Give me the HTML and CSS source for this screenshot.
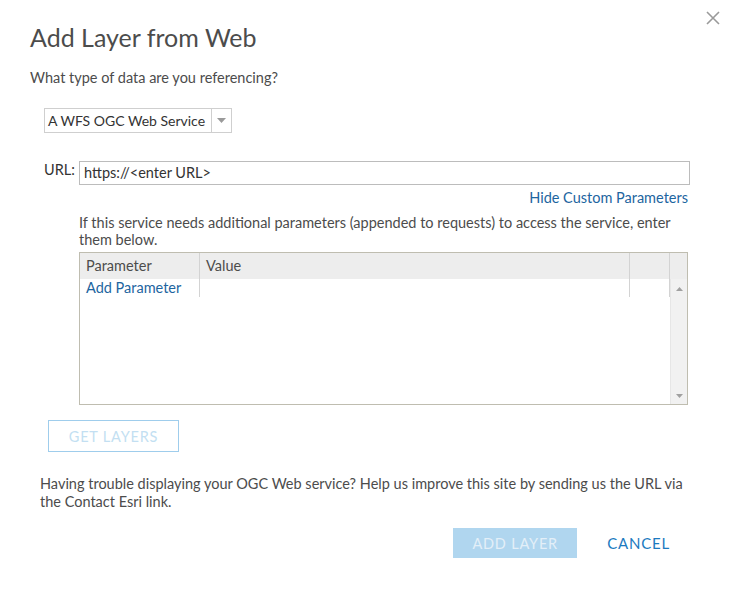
FILE: index.html
```html
<!DOCTYPE html>
<html>
<head>
<meta charset="utf-8">
<link rel="stylesheet" href="styles.css">
</head>
<body>
<div class="dialog">
  <button class="close" aria-label="Close">
    <svg width="14" height="14" viewBox="0 0 14 14"><path d="M1 1L13 13M13 1L1 13" stroke="#9a9a9a" stroke-width="1.6" fill="none"/></svg>
  </button>
  <h1 class="title">Add Layer from Web</h1>
  <p class="question">What type of data are you referencing?</p>
  <div class="select">
    <span class="select-text">A WFS OGC Web Service</span>
    <span class="select-arrow"><svg width="9" height="5" viewBox="0 0 9 5"><path d="M0 0H9L4.5 5Z" fill="#9a9a9a"/></svg></span>
  </div>
  <div class="url-row">
    <label class="url-label">URL:</label>
    <div class="url-input">https://&lt;enter URL&gt;</div>
  </div>
  <div class="params">
    <div class="hide-link">Hide Custom Parameters</div>
    <p class="params-note">If this service needs additional parameters (appended to requests) to access the service, enter them below.</p>
    <div class="grid">
      <div class="grid-header">
        <div class="col col-param">Parameter</div>
        <div class="col col-value">Value</div>
        <div class="col col-extra"></div>
        <div class="col col-scroll-head"></div>
      </div>
      <div class="grid-body">
        <div class="rows">
          <div class="row">
            <div class="cell cell-param">Add Parameter</div>
            <div class="cell cell-value"></div>
            <div class="cell cell-extra"></div>
          </div>
        </div>
        <div class="scrollbar">
          <svg width="7" height="4" viewBox="0 0 7 4"><path d="M0 4H7L3.5 0Z" fill="#a0a0a0"/></svg>
          <svg width="7" height="4" viewBox="0 0 7 4"><path d="M0 0H7L3.5 4Z" fill="#a0a0a0"/></svg>
        </div>
      </div>
    </div>
  </div>
  <button class="btn-outline">GET LAYERS</button>
  <p class="help">Having trouble displaying your OGC Web service? Help us improve this site by sending us the URL via the Contact Esri link.</p>
  <div class="actions">
    <button class="btn-primary">ADD LAYER</button>
    <button class="btn-link">CANCEL</button>
  </div>
</div>
</body>
</html>
```
FILE: styles.css
```css
* { box-sizing: border-box; }
html, body { margin: 0; padding: 0; background: #fff; }
body {
  font-family: Lato, "Open Sans", sans-serif;
  color: #4c4c4c;
  font-size: 14.5px;
}
.dialog {
  position: relative;
  width: 730px;
  height: 590px;
  padding: 22px 40px 0 30px;
}
.close {
  position: absolute;
  top: 11px;
  right: 10px;
  border: 0;
  background: none;
  padding: 0;
  width: 14px;
  height: 14px;
  display: flex;
}
.title {
  margin: 0;
  font-size: 25px;
  font-weight: 400;
  line-height: 30px;
  color: #4c4c4c;
}
.question {
  margin: 16px 0 0;
  line-height: 20px;
}
.select {
  margin: 20px 0 0 14px;
  width: 188px;
  height: 25px;
  border: 1px solid #cfcfcf;
  display: flex;
  align-items: stretch;
}
.select-text {
  flex: 1;
  padding-left: 3px;
  line-height: 23px;
  color: #333;
  white-space: nowrap;
  font-size: 14px;
}
.select-arrow {
  width: 20px;
  border-left: 1px solid #cfcfcf;
  display: flex;
  align-items: center;
  justify-content: center;
}
.url-row {
  display: flex;
  align-items: flex-start;
  margin: 28px 0 0 14px;
}
.url-label {
  width: 35px;
  line-height: 18px;
  color: #333;
}
.url-input {
  flex: 1;
  height: 24px;
  border: 1px solid #bcbcbc;
  padding-left: 4px;
  line-height: 22px;
  color: #333;
}
.params {
  margin-left: 49px;
  margin-right: 2px;
}
.hide-link {
  text-align: right;
  color: #1d65a0;
  line-height: 20px;
  margin-top: 3px;
}
.params-note {
  margin: 6px 0 0;
  line-height: 17px;
}
.grid {
  margin-top: 4px;
  height: 153px;
  border: 1px solid #bfbdb0;
  display: flex;
  flex-direction: column;
}
.grid-header {
  display: flex;
  background: #ededed;
  height: 26px;
  flex: none;
}
.col {
  line-height: 25px;
  padding-left: 6px;
  color: #4c4c4c;
}
.col-param { width: 120px; border-right: 1px solid #d3d3d3; }
.col-value { width: 430px; border-right: 1px solid #d3d3d3; }
.col-extra { width: 40px; border-right: 1px solid #d3d3d3; }
.col-scroll-head { flex: 1; }
.grid-body {
  flex: 1;
  display: flex;
}
.rows { flex: 1; }
.row { display: flex; height: 18px; }
.cell { line-height: 18px; padding-left: 6px; }
.cell-param { width: 120px; border-right: 1px solid #d3d3d3; color: #1d65a0; }
.cell-value { width: 430px; border-right: 1px solid #d3d3d3; }
.cell-extra { width: 40px; border-right: 1px solid #d3d3d3; }
.scrollbar {
  width: 18px;
  background: #f1f1f1;
  border-left: 1px solid #e6e6e6;
  display: flex;
  flex-direction: column;
  justify-content: space-between;
  align-items: center;
  padding: 8px 0 6px;
}
.btn-outline {
  margin: 15px 0 0 18px;
  width: 131px;
  height: 32px;
  border: 1px solid #9fcdec;
  background: #fff;
  color: #c3dff2;
  font-family: inherit;
  font-size: 14.5px;
  letter-spacing: 0.8px;
  padding: 0;
}
.help {
  margin: 23px 0 0 10px;
  line-height: 18px;
  color: #4c4c4c;
}
.actions {
  display: flex;
  justify-content: flex-end;
  align-items: center;
  margin: 17px 10px 0 0;
  gap: 20px;
}
.btn-primary {
  width: 124px;
  height: 30px;
  border: 0;
  background: #b0d6ef;
  color: #e3eff8;
  font-family: inherit;
  font-size: 14.5px;
  letter-spacing: 0.8px;
  padding: 0;
}
.btn-link {
  border: 0;
  background: none;
  color: #1b7ac0;
  font-family: inherit;
  font-size: 15px;
  letter-spacing: 0.8px;
  padding: 0 10px;
  height: 30px;
}
```
